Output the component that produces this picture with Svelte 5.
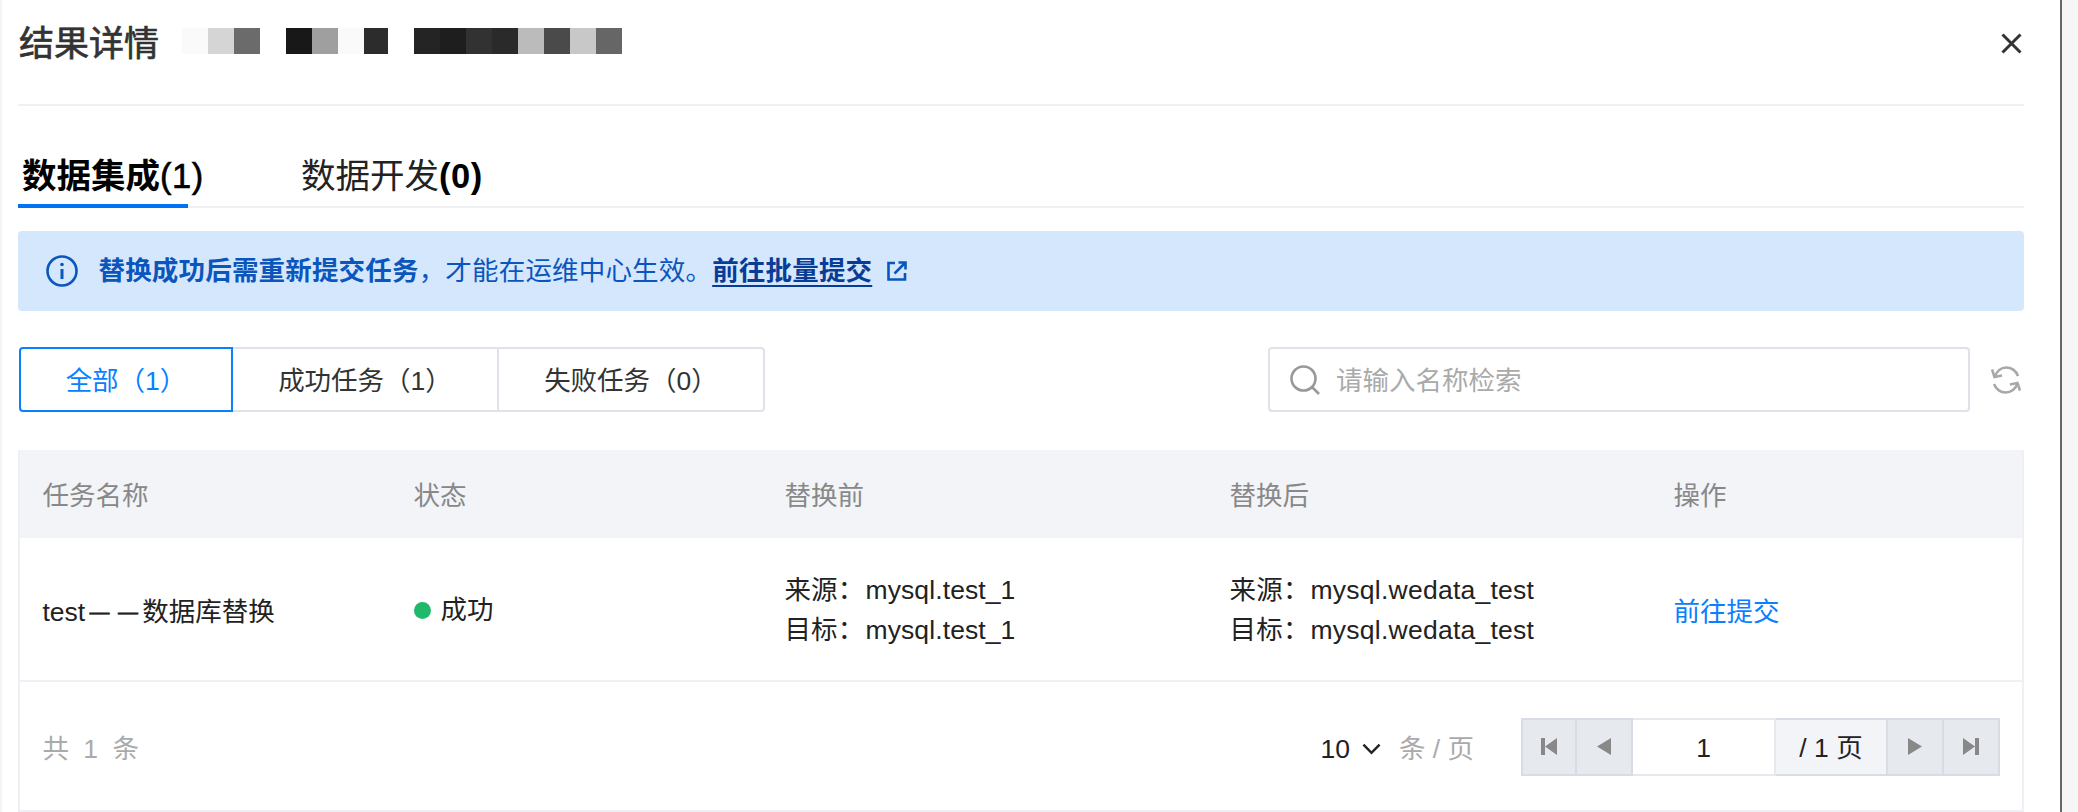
<script>
  const mosaic = [
    ['#fafafa', 26], ['#d5d5d5', 26], ['#6b6b6b', 26], ['#ffffff', 26],
    ['#181818', 26], ['#9f9f9f', 26], ['#fafafa', 26], ['#2c2c2c', 24], ['#ffffff', 26],
    ['#242424', 26], ['#1e1e1e', 26], ['#323232', 26], ['#2a2a2a', 26],
    ['#bbbbbb', 26], ['#4a4a4a', 26], ['#c8c8c8', 26], ['#666666', 26]
  ];
  const filters = ['全部（1）', '成功任务（1）', '失败任务（0）'];
  const heads = ['任务名称', '状态', '替换前', '替换后', '操作'];
</script>

<div class="page">
  <div class="drawer">
    <header class="head">
      <h1>结果详情</h1>
      <div class="mosaic">
        {#each mosaic as [color, w]}
          <i style="background:{color};width:{w}px"></i>
        {/each}
      </div>
      <svg class="close" viewBox="0 0 21 21" width="21" height="21" fill="none" stroke="#333" stroke-width="3">
        <path d="M1.500 1.500 19.500 19.500M19.500 1.500 1.500 19.500" />
      </svg>
    </header>

    <nav class="tabs">
      <div class="tab active">数据集成<span>(1)</span></div>
      <div class="tab">数据开发<span>(0)</span></div>
    </nav>

    <div class="alert">
      <svg viewBox="0 0 32 32" width="32" height="32" fill="none" stroke="#0a56bd">
        <circle cx="16" cy="16" r="14.500" stroke-width="2.600" />
        <path d="M16 14v10" stroke-width="3" />
        <circle cx="16" cy="9.500" r="1.800" fill="#0a56bd" stroke="none" />
      </svg>
      <p><b>替换成功后需重新提交任务</b>，才能在运维中心生效。<a href="#top">前往批量提交</a></p>
      <svg class="ext" viewBox="0 0 20 20" width="20" height="20" fill="none" stroke="#0a56bd" stroke-width="2.600">
        <path d="M8 2H1.500V18.500H18V12M7.500 12.500 18 2M11.500 1.500H18.500V8.500" />
      </svg>
    </div>

    <div class="toolbar">
      <div class="seg">
        {#each filters as f, i}
          <button class:on={i === 0}>{f}</button>
        {/each}
      </div>
      <div class="search">
        <svg viewBox="0 0 30 30" width="30" height="30" fill="none" stroke="#999" stroke-width="2.600">
          <circle cx="13.500" cy="13.500" r="12" />
          <path d="M22 22 29 29" />
        </svg>
        <span>请输入名称检索</span>
      </div>
      <svg class="refresh" viewBox="0 0 30 30" width="30" height="30" fill="none" stroke="#a8a8a8" stroke-width="2.600">
        <path d="M4 12C5.500 6 10 2.500 15.500 2.500C20 2.500 25 5.500 27 11M26.500 18C25 24 20 27.500 14.500 27.500C10 27.500 5 24.500 3 19" />
        <path d="M1 4.500 3.500 12 11 10.500M29 25.500 26.500 18 19 19.500" />
      </svg>
    </div>

    <section class="table">
      <div class="row th">
        {#each heads as h}<div>{h}</div>{/each}
      </div>
      <div class="row td">
        <div>test<span class="dash">—</span><span class="dash">—</span>数据库替换</div>
        <div class="status"><i></i>成功</div>
        <div class="pair"><span>来源：</span><span>mysql.test_1</span><span>目标：</span><span>mysql.test_1</span></div>
        <div class="pair wide"><span>来源：</span><span>mysql.wedata_test</span><span>目标：</span><span>mysql.wedata_test</span></div>
        <div class="link">前往提交</div>
      </div>
      <footer class="foot">
        <div class="total">共 1 条</div>
        <div class="size">10
          <svg viewBox="0 0 20 12" width="19" height="12" fill="none" stroke="#222" stroke-width="2.600"><path d="M1.500 1.500 10 10 18.500 1.500" /></svg>
        </div>
        <div class="unit">条 / 页</div>
        <div class="pager">
          <div class="pbtn"><svg viewBox="0 0 16 17" width="16" height="17" fill="#888"><path d="M0 0H4V17H0ZM16 0V17L4 8.500Z" /></svg></div>
          <div class="pbtn"><svg viewBox="0 0 14 17" width="14" height="17" fill="#888"><path d="M14 0V17L0 8.500Z" /></svg></div>
          <div class="pinput"><span>1</span></div>
          <div class="ptotal"><span>/ 1 页</span></div>
          <div class="pbtn"><svg viewBox="0 0 14 17" width="14" height="17" fill="#888"><path d="M0 0V17L14 8.500Z" /></svg></div>
          <div class="pbtn"><svg viewBox="0 0 16 17" width="16" height="17" fill="#888"><path d="M0 0V17L12 8.500ZM12 0H16V17H12Z" /></svg></div>
        </div>
      </footer>
    </section>
  </div>
</div>

<style>
  :global(body) { margin: 0; background: #f6f6f6; }
  .page {
    display: flex;
    width: 2078px;
    height: 812px;
    overflow: hidden;
    background: #f6f6f6;
    font: 26.5px/40px "Liberation Sans", "Noto Sans CJK SC", sans-serif;
    color: #222;
  }
  .drawer {
    box-sizing: border-box;
    width: 2062px;
    height: 812px;
    padding: 0 36px 0 16px;
    background: #fff;
    border-left: 2px solid #f3f4f7;
    border-right: 2px solid #666;
  }
  .head {
    box-sizing: border-box;
    height: 106px;
    display: flex;
    padding: 22px 0 0 1px;
    border-bottom: 2px solid #eef0f4;
  }
  h1 {
    margin: 1px 0 0;
    font-size: 35px;
    line-height: 42px;
    font-weight: 400;
    -webkit-text-stroke: 0.7px #333;
    color: #333;
    width: 141px;
    white-space: nowrap;
  }
  .mosaic { display: flex; height: 26px; margin: 6px 0 0 22px; }
  .mosaic i { display: block; }
  .close { margin: 11px 2px 0 auto; }
  .tabs {
    box-sizing: border-box;
    height: 102px;
    display: flex;
    padding-top: 46px;
    border-bottom: 2px solid #eef0f4;
    font-size: 34.500px;
    line-height: 48px;
    color: #222;
  }
  .tab { box-sizing: border-box; height: 56px; white-space: nowrap; padding: 0 4px; }
  .tab span { font-weight: 700; color: #000; letter-spacing: 0.5px; }
  .tab.active {
    width: 170px;
    font-weight: 700;
    color: #000;
    border-bottom: 4px solid #0073f5;
    margin-right: 109px;
  }
  .tab.active span { font-weight: 400; -webkit-text-stroke: 0.6px #000; }
  .alert {
    margin-top: 23px;
    height: 80px;
    background: #d5e7fd;
    border-radius: 4px;
    display: flex;
    align-items: center;
    padding-left: 28px;
    color: #0a56bd;
  }
  .alert p { margin: 0 0 0 20.5px; white-space: nowrap; letter-spacing: 0.18px; }
  .alert b { font-weight: 700; }
  .alert a { color: #083c96; font-weight: 700; text-decoration: underline; text-underline-offset: 5px; text-decoration-thickness: 2px; }
  .ext { margin-left: 15px; }
  .toolbar { margin-top: 36px; height: 65px; display: flex; align-items: center; }
  .seg { display: flex; height: 65px; margin-left: 1px; }
  .seg button {
    box-sizing: border-box;
    width: 266px;
    height: 65px;
    padding: 2px 0 0;
    background: #fff;
    font: inherit;
    color: #333;
    border: 2px solid #dfe2e8;
    border-left-width: 0;
    white-space: nowrap;
  }
  .seg button:first-child {
    width: 214px;
    border: 2px solid #0a80ff;
    border-radius: 4px 0 0 4px;
    color: #0a80ff;
  }
  .seg button:last-child { border-radius: 0 4px 4px 0; }
  .search {
    box-sizing: border-box;
    width: 702px;
    height: 65px;
    margin-left: auto;
    padding: 2px 0 0 20px;
    display: flex;
    align-items: center;
    gap: 16px;
    border: 2px solid #dfe2e8;
    border-radius: 4px;
    color: #aaa;
  }
  .search svg { margin-top: -2px; }
  .refresh { margin: 0 3px 0 21px; }
  .table {
    box-sizing: border-box;
    margin-top: 38px;
    border: 2px solid #eef0f5;
    border-top: 0;
    height: 362px;
  }
  .row {
    display: grid;
    grid-template-columns: 371px 371px 445px 444px 1fr;
    align-items: center;
    box-sizing: border-box;
  }
  .row > div { padding-left: 22.5px; white-space: nowrap; }
  .th { height: 88px; padding-top: 4px; background: #f2f4f8; color: #888; }
  .td { height: 144px; padding-top: 6px; border-bottom: 2px solid #eef0f4; }
  .dash {
    display: inline-block;
    width: 28.5px;
    text-align: center;
    font-family: "Liberation Sans", sans-serif;
    font-size: 20px;
    -webkit-text-stroke: 0.6px #222;
    vertical-align: 2px;
    line-height: 20px;
  }
  .status { display: flex; align-items: center; margin-top: -4px; }
  .status i { width: 17px; height: 17px; border-radius: 50%; background: #1fb96c; margin-right: 10px; }
  .row > .pair {
    display: grid;
    grid-template-columns: 81px auto;
    justify-content: start;
    margin-top: -4px;
    letter-spacing: 0.1px;
  }
  .row > .pair.wide { letter-spacing: 0.25px; }
  .link { color: #0a80ff; }
  .foot {
    box-sizing: border-box;
    height: 128px;
    display: flex;
    align-items: center;
    padding: 0 22px 0 22.5px;
  }
  .total { color: #aaa; word-spacing: 7px; margin-top: 6px; }
  .size { margin: 6px 0 0 auto; display: flex; align-items: center; gap: 12px; }
  .unit { margin: 6px 0 0 18px; color: #aaa; }
  .pager {
    box-sizing: border-box;
    margin: 1px 0 0 47px;
    height: 58px;
    display: flex;
  }
  .pager > div {
    box-sizing: border-box;
    height: 58px;
    display: flex;
    align-items: center;
    justify-content: center;
    white-space: nowrap;
    border: 2px solid #d8dde5;
    border-left-width: 0;
  }
  .pager span { margin-top: 2px; }
  .pbtn { width: 56px; background: #e6e9ee; }
  .pager > .pbtn:first-child { border-left-width: 2px; width: 56px; }
  .pager > .pinput { width: 143px; background: #fff; border-color: #e6e8ee; }
  .pager > .ptotal { width: 112px; background: #f2f4f8; }
</style>
